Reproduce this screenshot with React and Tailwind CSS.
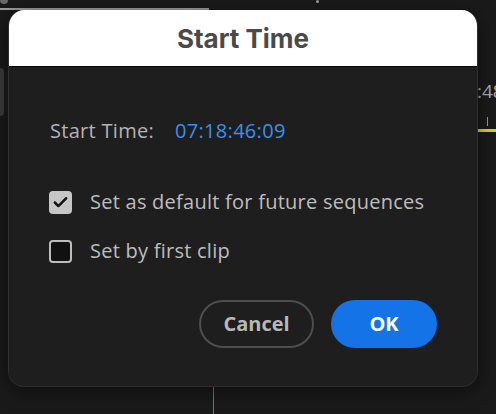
import { Check } from 'lucide-react'

const body = { fontFamily: '"Open Sans", "Noto Sans", sans-serif' }

function Checkbox({ checked, label }) {
  return (
    <div className="flex items-center">
      {checked ? (
        <div className="w-[23px] h-[23px] rounded-[4px] bg-[#c6c6c6] flex items-center justify-center">
          <Check size={17} strokeWidth={3.5} className="text-[#141414]" />
        </div>
      ) : (
        <div className="w-[23px] h-[23px] rounded-[4px] border-[2.5px] border-[#bdbdbd] bg-[#111111]" />
      )}
      <span className="ml-[18px] text-[20px] leading-[24px] tracking-[0.25px] text-[#bdbdbd]">{label}</span>
    </div>
  )
}

export default function App() {
  return (
    <div className="relative w-[496px] h-[414px] overflow-hidden bg-[#1a1a1a]" style={body}>
      {/* background app behind the modal */}
      <div className="absolute left-0 top-[8px] w-[209px] h-[2px] bg-[#9c9c9c]" />
      <div className="absolute left-0 top-[-4px] w-[8px] h-[8px] rounded-full bg-[#6a6a6a]" />
      <div className="absolute left-[316px] top-0 w-[3px] h-[3px] rounded-full bg-[#9a9a9a]" />
      <div className="absolute left-[-6px] top-[68px] w-[10px] h-[48px] rounded-[4px] bg-[#3a3a3a]" />
      <div className="absolute left-[477px] top-[79px] text-[19px] leading-[24px] text-[#a8a8a8]">:48</div>
      <div className="absolute left-[487px] top-[117px] w-[1px] h-[9px] bg-[#9a9a9a]" />
      <div className="absolute left-[478px] top-[129px] w-[18px] h-[3px] bg-[#d8d414]" />
      <div className="absolute left-[213px] top-[385px] w-[1px] h-[29px] bg-[#3d7fd6]" />

      <div className="absolute left-[8px] top-[10px] w-[470px] rounded-[16px] overflow-hidden border border-[#2e2e2e] border-t-0 shadow-[0_4px_18px_rgba(0,0,0,0.5)]">
        <div
          className="h-[56px] bg-white flex items-center justify-center text-[26px] font-bold text-[#4a4a4a]"
          style={{ fontFamily: 'Inter, "Liberation Sans", sans-serif' }}
        >
          Start Time
        </div>
        <div className="h-[1px] bg-[#050505]" />
        <div className="bg-[#1e1e1e] flex flex-col pl-[40px] pr-[40px] pb-[38px]">
          <div className="mt-[52px] flex items-center text-[20px] leading-[24px] tracking-[0.3px]">
            <span className="ml-[1px] text-[#b4b4b4]">Start Time:</span>
            <span className="ml-[21px] text-[#3f8fe8]">07:18:46:09</span>
          </div>
          <div className="mt-[47px]">
            <Checkbox checked label="Set as default for future sequences" />
          </div>
          <div className="mt-[25px]">
            <Checkbox label="Set by first clip" />
          </div>
          <div className="mt-[37px] flex justify-end gap-[17px]">
            <button className="w-[115px] h-[48px] rounded-full border-[2.5px] border-[#4e4e4e] text-[20px] font-bold text-[#b8b8b8]">
              Cancel
            </button>
            <button className="w-[106px] h-[48px] rounded-full bg-[#1473e6] text-[20px] font-bold text-white">
              OK
            </button>
          </div>
        </div>
      </div>
    </div>
  )
}
